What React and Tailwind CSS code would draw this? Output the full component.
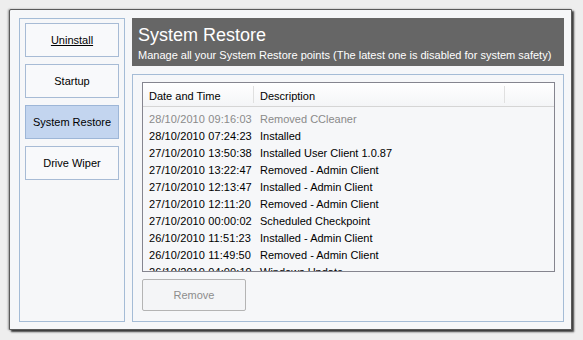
import { useState } from "react";

const MENU = ["Uninstall", "Startup", "System Restore", "Drive Wiper"];

const POINTS = [
  ["28/10/2010 09:16:03", "Removed CCleaner", true],
  ["28/10/2010 07:24:23", "Installed"],
  ["27/10/2010 13:50:38", "Installed User Client 1.0.87"],
  ["27/10/2010 13:22:47", "Removed - Admin Client"],
  ["27/10/2010 12:13:47", "Installed - Admin Client"],
  ["27/10/2010 12:11:20", "Removed - Admin Client"],
  ["27/10/2010 00:00:02", "Scheduled Checkpoint"],
  ["26/10/2010 11:51:23", "Installed - Admin Client"],
  ["26/10/2010 11:49:50", "Removed - Admin Client"],
  ["26/10/2010 04:00:19", "Windows Update"],
];

const App = () => {
  const [active, setActive] = useState("System Restore");

  return (
    <div
      className="w-[583px] h-[340px] bg-[#eeeeee] pl-[9px] pt-[9px] text-[11px] text-black"
      style={{ fontFamily: '"Liberation Sans", Arial, sans-serif' }}
    >
      <div className="w-[563px] h-[321px] bg-[#f6f7f9] border border-[#5a5a5a] rounded-tl-[2px] shadow-[2px_2px_2px_rgba(0,0,0,0.75),-1px_0_2px_rgba(0,0,0,0.35)] flex gap-[7px] pl-[9px] pt-[8px] pr-[7px] pb-[7px]">
        {/* left menu */}
        <div className="w-[106px] border border-[#a5bcd6] flex flex-col gap-[7px] px-[5px] pt-[4px]">
          {MENU.map((m) => (
            <button
              key={m}
              onClick={() => setActive(m)}
              className={
                "h-[34px] border text-[11px] " +
                (active === m
                  ? "bg-[#c3d5ef] border-[#9db6d7]"
                  : "bg-[#f8f9fb] border-[#a7bbd5]") +
                (m === "Uninstall" ? " underline" : "")
              }
            >
              {m}
            </button>
          ))}
        </div>

        {/* right content */}
        <div className="flex-1 flex flex-col gap-[8px]">
          <div className="h-[48px] bg-[#666666] text-white px-[6px] pt-[6px]">
            <div className="text-[18px] leading-[22px]">System Restore</div>
            <div className="text-[11px] leading-[14px] mt-[2px]">
              Manage all your System Restore points (The latest one is disabled for system safety)
            </div>
          </div>

          <div className="flex-1 border border-[#a5bcd6] pl-[9px] pr-[8px] pt-[7px] pb-[9px] flex flex-col">
            <div className="h-[190px] border border-[#85858f] overflow-hidden">
              <div className="h-[24px] flex border-b border-[#d5d5d5] bg-gradient-to-b from-[#ffffff] to-[#f4f5f7]">
                <div className="w-[111px] pl-[6px] pt-[4px] flex items-center border-r border-[#e0e0e0] my-[3px]">
                  Date and Time
                </div>
                <div className="w-[251px] pl-[6px] pt-[4px] flex items-center border-r border-[#e0e0e0] my-[3px]">
                  Description
                </div>
              </div>
              <div className="pt-[4px]">
                {POINTS.map(([d, t, off]) => (
                  <div
                    key={d}
                    className={"h-[17px] flex items-center " + (off ? "text-[#8a8a8a]" : "")}
                  >
                    <div className="w-[111px] pl-[6px] tracking-[0.1px]">{d}</div>
                    <div className="pl-[6px]">{t}</div>
                  </div>
                ))}
              </div>
            </div>
            <div className="mt-[7px]">
              <button
                disabled
                className="w-[104px] h-[32px] border border-[#b4b4b4] rounded-[2px] bg-[#f4f5f7] text-[#8d8d8d] text-[11px]"
              >
                Remove
              </button>
            </div>
          </div>
        </div>
      </div>
    </div>
  );
};

export default App;
